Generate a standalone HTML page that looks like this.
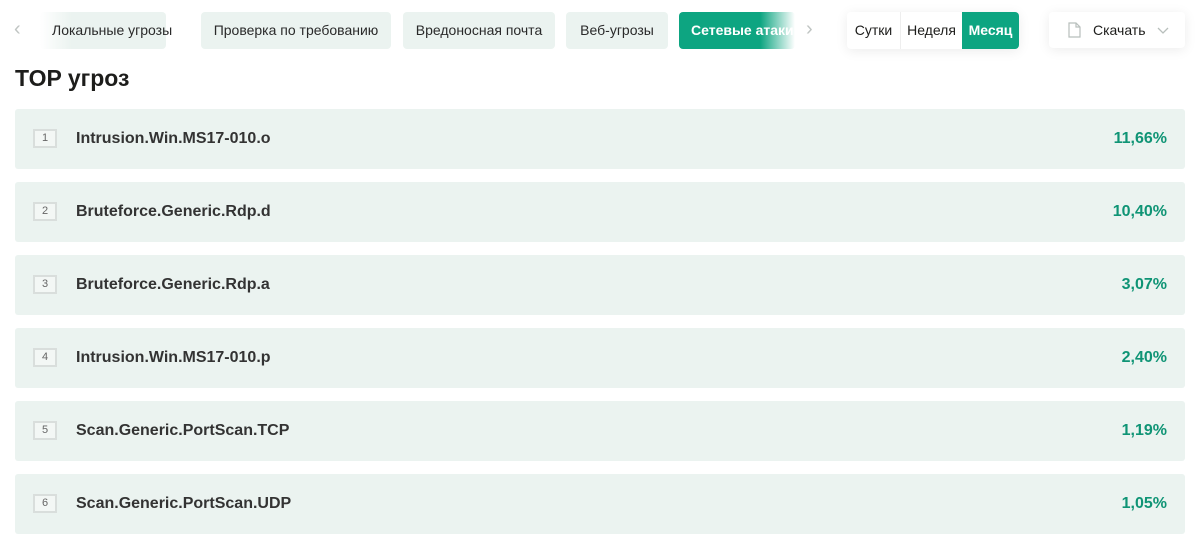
<!DOCTYPE html>
<html><head><meta charset="utf-8"><style>
*{box-sizing:border-box;margin:0;padding:0}
body{width:1198px;height:545px;background:#fff;font-family:"Liberation Sans","DejaVu Sans",sans-serif;color:#1d1d1b;position:relative;overflow:hidden}
.tab{position:absolute;top:12px;height:37px;background:#ebf3f0;border-radius:4px;font-size:14px;line-height:37px;text-align:center;color:#2a2a2a;white-space:nowrap}
.act{background:#0da581;color:#fff;font-weight:bold}
.chev{position:absolute;top:17px;color:#c0c5c3;font-size:20px}
.seg{position:absolute;top:12px;left:847px;width:172px;height:37px;border-radius:4px;box-shadow:0 2px 12px rgba(0,0,0,.08);background:#fff;font-size:14px;line-height:37px;display:flex;overflow:hidden}
.seg div{text-align:center}
.dl{position:absolute;top:12px;left:1049px;width:136px;height:36px;border-radius:4px;box-shadow:0 2px 12px rgba(0,0,0,.08);background:#fff;font-size:14px;line-height:36px}
h1{position:absolute;left:15px;top:65px;font-size:23px;font-weight:bold}
.row{position:absolute;left:15px;width:1170px;height:60px;background:#ebf3f0;border-radius:3px}
.n{position:absolute;left:18px;top:20px;width:24px;height:19px;border:2px solid #d9dedc;font-size:11px;color:#666;text-align:center;line-height:15px;background:#f3f7f5}
.t{position:absolute;left:61px;top:21px;font-size:16px;font-weight:bold;color:#333}
.p{position:absolute;right:18px;top:21px;font-size:16px;font-weight:bold;color:#0f9475}
</style></head><body>
<div class="chev" style="left:14px;top:18px">‹</div>
<div class="tab" style="left:40px;width:126px;padding-left:12px;text-align:left;background:linear-gradient(90deg,#fff,#ebf3f0 25%)">Локальные угрозы</div>
<div class="tab" style="left:201px;width:190px">Проверка по требованию</div>
<div class="tab" style="left:403px;width:152px">Вредоносная почта</div>
<div class="tab" style="left:566px;width:102px">Веб-угрозы</div>
<div class="tab act" style="left:679px;width:116px;padding-left:12px;text-align:left;overflow:hidden;background:linear-gradient(90deg,#0da581 70%,#fff)">Сетевые атаки</div>
<div class="chev" style="left:806px;top:18px">›</div>
<div class="seg"><div style="width:53px">Сутки</div><div style="width:62px;border-left:1px solid #eee">Неделя</div><div style="width:57px;background:#0da581;color:#fff;font-weight:bold">Месяц</div></div>
<div class="dl"><svg style="position:absolute;left:19px;top:10px" width="13" height="16" viewBox="0 0 13 16"><path d="M1 1h7l4 4v10H1z M8 1v4h4" fill="none" stroke="#b8bfbc" stroke-width="1.2"/></svg><span style="position:absolute;left:44px">Скачать</span><svg style="position:absolute;left:108px;top:15px" width="12" height="8" viewBox="0 0 12 8"><path d="M1 1l5 5 5-5" fill="none" stroke="#b8bfbc" stroke-width="1.3"/></svg></div>
<h1>TOP угроз</h1>
<div class="row" style="top:109px"><div class="n">1</div><div class="t">Intrusion.Win.MS17-010.o</div><div class="p">11,66%</div></div>
<div class="row" style="top:182px"><div class="n">2</div><div class="t">Bruteforce.Generic.Rdp.d</div><div class="p">10,40%</div></div>
<div class="row" style="top:255px"><div class="n">3</div><div class="t">Bruteforce.Generic.Rdp.a</div><div class="p">3,07%</div></div>
<div class="row" style="top:328px"><div class="n">4</div><div class="t">Intrusion.Win.MS17-010.p</div><div class="p">2,40%</div></div>
<div class="row" style="top:401px"><div class="n">5</div><div class="t">Scan.Generic.PortScan.TCP</div><div class="p">1,19%</div></div>
<div class="row" style="top:474px"><div class="n">6</div><div class="t">Scan.Generic.PortScan.UDP</div><div class="p">1,05%</div></div>
</body></html>
